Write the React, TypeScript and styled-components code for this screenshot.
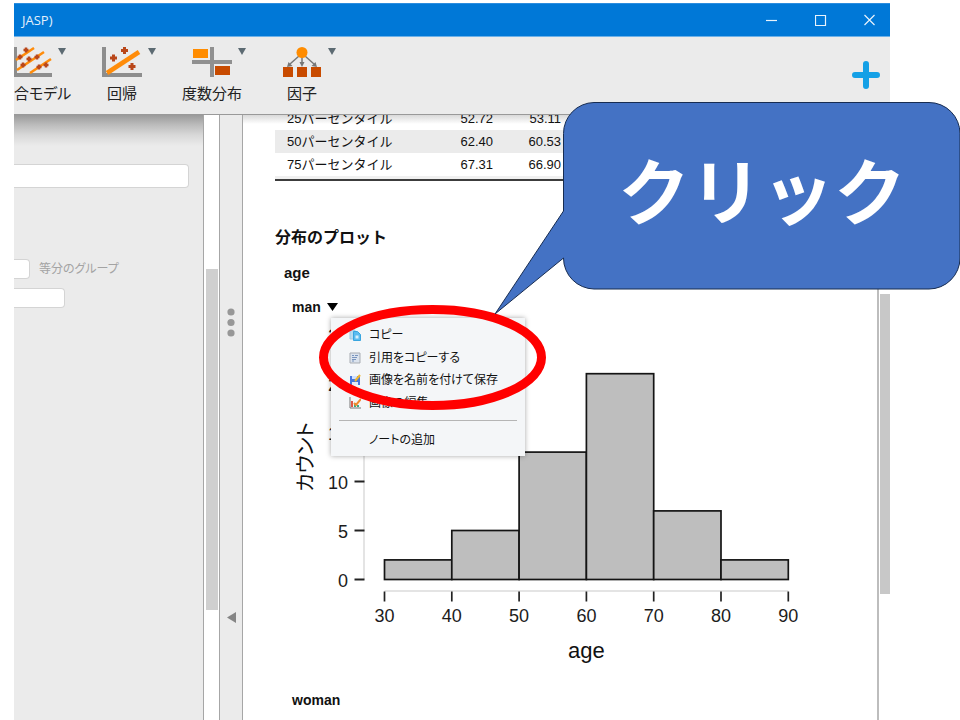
import React from "react";
import styled, { createGlobalStyle } from "styled-components";

const GlobalStyle = createGlobalStyle`
  * { box-sizing: border-box; }
  body { margin: 0; background: #fff; }
  button { border: 0; padding: 0; background: none; color: inherit; font: inherit; cursor: pointer; }
`;

const uiFont = `"Open Sans", "Noto Sans CJK JP", sans-serif`;
const reportFont = `"Liberation Sans", "Noto Sans CJK JP", sans-serif`;

const Slide = styled.main`
  position: relative;
  height: 100vh;
  min-height: 720px;
  padding: 3px 70px 0 14px;
  overflow: hidden;
  font-family: ${uiFont};
`;

const Window = styled.div`
  display: flex;
  flex-direction: column;
  height: 100%;
  overflow: hidden;
`;

const TitleBar = styled.header`
  display: flex;
  flex: none;
  align-items: center;
  justify-content: space-between;
  height: 34px;
  padding: 0 14px 0 8px;
  border-top: 1px solid #2b8ddf;
  border-bottom: 1px solid #6db1e8;
  background: #0078d7;
  color: #e4f0fb;
  font-size: 13px;
`;

const WindowControls = styled.div`
  display: flex;
  gap: 37px;
  button { display: flex; }
`;

const Ribbon = styled.nav`
  position: relative;
  z-index: 1;
  display: flex;
  flex: none;
  height: 78px;
  padding-top: 10px;
  border-bottom: 1px solid #999;
  background: #ebebeb;
`;

const RibbonButton = styled.button<{ $clipped?: boolean }>`
  display: flex;
  flex-direction: column;
  align-items: ${(p) => (p.$clipped ? "flex-start" : "stretch")};
  width: ${(p) => (p.$clipped ? 63 : 90)}px;
  height: 60px;
  gap: 3px;
  color: #222;
  font-size: 15px;
  line-height: 24px;
  white-space: nowrap;
  font-feature-settings: "palt";
`;

const IconRow = styled.span<{ $clipped?: boolean }>`
  display: grid;
  grid-template-columns: ${(p) => (p.$clipped ? "auto auto" : "1fr auto 1fr")};
  column-gap: 6px;
  height: 31px;
  > :nth-last-child(2) { ${(p) => (p.$clipped ? "" : "grid-column: 2;")} }
`;

const AddButton = styled.button`
  align-self: flex-start;
  display: flex;
  margin: 13px 10px 0 auto;
`;

const Workspace = styled.div`
  display: flex;
  flex: 1;
  min-height: 0;
`;

const OptionsPanel = styled.form`
  display: flex;
  flex: none;
  flex-direction: column;
  align-items: flex-start;
  width: 190px;
  padding-top: 49px;
  border-right: 1px solid #a6a6a6;
  background: linear-gradient(#999, #bcbcbc 10px, #d8d8d8 20px, #ebebeb 31px);
`;

const TextField = styled.input<{ $width: number; $tall?: boolean }>`
  width: ${(p) => p.$width}px;
  height: ${(p) => (p.$tall ? 24 : 20)}px;
  border: 1px solid #d4d4d4;
  border-left: 0;
  border-radius: 0 4px 4px 0;
  background: #fff;
  outline: none;
`;

const FieldRow = styled.label`
  display: flex;
  align-items: center;
  gap: 9px;
  height: 20px;
  margin: 71px 0 9px;
  color: #a3a3a3;
  font-size: 12px;
  line-height: 18px;
  font-feature-settings: "palt";
`;

const OptionsScroll = styled.div`
  flex: none;
  width: 16px;
  padding: 154px 1px 0 2px;
  border-right: 1px solid #a6a6a6;
  background: #fff;
`;

const Thumb = styled.div<{ $size: number; $color: string }>`
  height: ${(p) => p.$size}px;
  background: ${(p) => p.$color};
`;

const Splitter = styled.div`
  display: flex;
  flex: none;
  flex-direction: column;
  align-items: center;
  width: 23px;
  padding-top: 193px;
  border-right: 1px solid #a6a6a6;
  background: #ebebeb;
`;

const Collapse = styled.button`
  display: flex;
  margin-top: 274px;
`;

const Report = styled.article`
  flex: 1;
  min-width: 0;
  padding-left: 32px;
  background: linear-gradient(#d9d9d9, #fff 9px);
  border-right: 2px solid #bdbdbd;
  overflow: hidden;
  color: #111;
  font-family: ${reportFont};
`;

const ReportScroll = styled.div`
  flex: none;
  width: 11px;
  padding: 179px 0 0 1px;
  background: #fff;
`;

const StatsTable = styled.table`
  width: 295px;
  margin-top: -7px;
  border-collapse: collapse;
  table-layout: fixed;
  border-bottom: 2px solid #3c3c3c;
  font-size: 13px;
  line-height: 23px;
  th { width: 159px; padding: 0 0 0 12px; text-align: left; font-weight: 400; }
  td { padding: 0 9px; text-align: right; }
  tbody tr:first-child { line-height: 22px; }
  tbody tr:nth-child(even) { background: #ebebeb; }
  tfoot td { height: 4px; padding: 0; background: #f0f0f0; }
`;

const SectionTitle = styled.h2`
  margin: 45px 0 0;
  font-size: 16px;
  line-height: 24px;
`;

const VariableTitle = styled.h3`
  margin: 13px 0 0 9px;
  font-size: 15px;
  line-height: 20px;
`;

const GroupTitle = styled.h4<{ $gap: number }>`
  position: relative;
  z-index: 1;
  display: flex;
  align-items: center;
  gap: 6px;
  margin: ${(p) => p.$gap}px 0 0 17px;
  font-size: 14px;
  line-height: 20px;
  button { display: flex; }
`;

const Chart = styled.svg`
  display: block;
  margin-left: 18px;
  font-family: ${reportFont};
`;

const Menu = styled.ul`
  position: absolute;
  top: 21px;
  left: 39px;
  width: 194px;
  margin: 0;
  padding: 6px 8px 5px;
  list-style: none;
  background: #f4f6f8;
  box-shadow: 0 0 5px rgba(0, 0, 0, 0.35);
  color: #111;
  font-family: ${uiFont};
  font-size: 12px;
  line-height: 18px;
  font-weight: 400;
  font-feature-settings: "palt";
`;

const MenuGroup = styled.li<{ $height: number }>`
  display: grid;
  grid-auto-rows: 1fr;
  height: ${(p) => p.$height}px;
  & + & { margin-top: 6px; padding-top: 7px; border-top: 1px solid #b5b5b5; }
`;

const MenuItem = styled.button`
  && { display: grid; }
  grid-template-columns: 12px 1fr;
  align-items: center;
  gap: 8px;
  width: 100%;
  padding-left: 10px;
  text-align: left;
  white-space: nowrap;
  span { grid-column: 2; }
`;

const Highlight = styled.svg`
  position: absolute;
  z-index: 2;
  top: 305px;
  left: 319px;
  pointer-events: none;
`;

const Callout = styled.aside`
  position: absolute;
  z-index: 3;
  top: 101px;
  left: 494px;
  width: 467px;
  height: 215px;
  pointer-events: none;
  > svg { position: absolute; inset: 0; }
`;

const CalloutText = styled.p`
  position: relative;
  margin: 0 0 0 69px;
  color: #fff;
  font-family: "Noto Sans CJK JP", sans-serif;
  font-size: 72px;
  font-weight: 700;
  line-height: 174px;
  text-align: center;
`;

const plus = (x: number, y: number, s = 3) => `M${x - s} ${y}h${2 * s}M${x} ${y - s}v${2 * s}`;

const MixedIcon = () => (
  <svg width="38" height="31" viewBox="0 0 38 31" fill="none">
    <path d="M1 0v29M0 28h38" stroke="#8d8d8d" strokeWidth="4" />
    <path d="M2 13 20 1M3 23 30 5M16 26 37 12" stroke="#ff8c0a" strokeWidth="2.500" />
    <path
      d={[[6, 10], [12, 3], [9, 18], [15, 12], [23, 10], [25, 20], [32, 18]].map(([x, y]) => plus(x, y, 2.5)).join("")}
      stroke="#b9471a"
      strokeWidth="2.500"
    />
  </svg>
);

const RegressionIcon = () => (
  <svg width="40" height="31" viewBox="0 0 40 31" fill="none">
    <path d="M2 0v30M0 28h40" stroke="#8d8d8d" strokeWidth="4" />
    <path d="M5 26 37 5" stroke="#ff8c0a" strokeWidth="4.500" />
    <path d={plus(11.5, 11, 3.5) + plus(22.5, 3.5, 3.5) + plus(30, 19.5, 3.5)} stroke="#b9471a" strokeWidth="3" />
  </svg>
);

const FrequencyIcon = () => (
  <svg width="40" height="31" viewBox="0 0 40 31">
    <path d="M18 0h4v30h-4zM0 13h40v4H0z" fill="#909090" />
    <path d="M1 2h15v9H1z" fill="#ff8c00" />
    <path d="M23 19h15v9H23z" fill="#c84b00" />
  </svg>
);

const FactorIcon = () => (
  <svg width="40" height="31" viewBox="0 0 40 31">
    <path d="M17 9 8 17M20 9v8M23 9l9 8" stroke="#777" strokeWidth="1.500" fill="none" />
    <path d="m5 20 1.500-5 4 4zM17.500 15h5L20 20zM35 20l-1.500-5-4 4z" fill="#777" />
    <circle cx="20" cy="5.500" r="5.500" fill="#ff8c00" />
    <path d="M1 20h10v10H1zM15 20h10v10H15zM29 20h10v10H29z" fill="#c84b00" />
  </svg>
);

const DropArrow = () => (
  <svg width="8" height="8" viewBox="0 0 8 8">
    <path d="M0 1h8L4 8z" fill="#5c6a72" />
  </svg>
);

const CopyIcon = () => (
  <svg width="12" height="12" viewBox="0 0 12 12">
    <path d="M1 1h5v9H1z" fill="#b9dcf1" stroke="#9ecbe6" />
    <path d="M4.500 2.500h4l3 3v6h-7z" fill="#5bbcf0" stroke="#38a5df" />
    <path d="M6.500 6.500h3v3h-3z" fill="#d8f0fc" />
  </svg>
);

const CiteIcon = () => (
  <svg width="12" height="12" viewBox="0 0 12 12" fill="none">
    <path d="M1 1h10v10H1z" fill="#dbe3ee" stroke="#a9adb3" />
    <path d="M3 3.500h2m1 0h3M3 5.500h5M3 7.500h4M3 9h2" stroke="#7994bd" />
  </svg>
);

const SaveIcon = () => (
  <svg width="12" height="12" viewBox="0 0 12 12">
    <path d="M1 2h10v9H1z" fill="#4777dc" />
    <path d="M3 2h5v3H3z" fill="#cfe0ff" />
    <path d="M3 8h6v3H3z" fill="#e4ebf8" />
    <path d="m6 7 5-6" stroke="#efb52c" strokeWidth="2" />
  </svg>
);

const EditIcon = () => (
  <svg width="12" height="12" viewBox="0 0 12 12" fill="none">
    <path d="M1 0v11h11" stroke="#777" />
    <path d="M3 4v6" stroke="#e05745" strokeWidth="2" />
    <path d="M6 6v4M9 8v2" stroke="#3aa882" strokeWidth="2" />
    <path d="m5 6 2 2 5-6" stroke="#f28a2b" strokeWidth="2" />
  </svg>
);

const ribbonItems = [
  { label: "合モデル", Icon: MixedIcon, clipped: true },
  { label: "回帰", Icon: RegressionIcon },
  { label: "度数分布", Icon: FrequencyIcon },
  { label: "因子", Icon: FactorIcon },
];

const percentiles = [
  ["25パーセンタイル", "52.72", "53.11"],
  ["50パーセンタイル", "62.40", "60.53"],
  ["75パーセンタイル", "67.31", "66.90"],
];

const menuItems = [
  { label: "コピー", Icon: CopyIcon },
  { label: "引用をコピーする", Icon: CiteIcon },
  { label: "画像を名前を付けて保存", Icon: SaveIcon },
  { label: "画像の編集", Icon: EditIcon },
];

const counts = [2, 5, 13, 21, 7, 2];
const chartX = (age: number) => 91.5 + (age - 30) * 6.73;
const chartY = (count: number) => 262.5 - count * 9.8;

const Histogram = () => (
  <Chart width="510" height="370" viewBox="0 0 510 370" role="img" aria-label="age">
    <path d={`M71 ${chartY(25)}V${chartY(0)}M${chartX(30)} 274H${chartX(90)}`} stroke="#dcdcdc" strokeWidth="1.500" />
    {counts.map((count, i) => (
      <rect
        key={i}
        x={chartX(30 + i * 10)}
        y={chartY(count)}
        width={67.3}
        height={chartY(0) - chartY(count)}
        fill="#bebebe"
        stroke="#141414"
        strokeWidth="1.700"
      />
    ))}
    <g fill="#1c1c1c" fontSize="18">
      {[0, 5, 10, 15, 20, 25].map((n) => (
        <g key={n}>
          <path d={`M61.500 ${chartY(n)}h10`} stroke="#222" strokeWidth="2" />
          <text x="55" y={chartY(n) + 7} textAnchor="end">{n}</text>
        </g>
      ))}
      {[30, 40, 50, 60, 70, 80, 90].map((n) => (
        <g key={n}>
          <path d={`M${chartX(n)} 274.500v10`} stroke="#222" strokeWidth="1.700" />
          <text x={chartX(n)} y="305" textAnchor="middle">{n}</text>
        </g>
      ))}
    </g>
    <g fill="#111" fontSize="22" textAnchor="middle">
      <text x={chartX(60)} y="341">age</text>
      <text transform="translate(20 140) rotate(-90)" fontSize="20" style={{ fontFeatureSettings: '"palt"' }}>カウント</text>
    </g>
  </Chart>
);

export default function App() {
  return (
    <Slide>
      <GlobalStyle />
      <Window>
        <TitleBar>
          <span>JASP)</span>
          <WindowControls>
            {[
              ["最小化", "M0 6.500h11"],
              ["最大化", "M.5 1.500h10v10H.5z"],
              ["閉じる", "m.5 1 10 10m0-10-10 10"],
            ].map(([label, d]) => (
              <button key={label} type="button" aria-label={label}>
                <svg width="12" height="12" viewBox="0 0 12 12" fill="none" stroke="#e8f3fc" strokeWidth="1.200">
                  <path d={d} />
                </svg>
              </button>
            ))}
          </WindowControls>
        </TitleBar>

        <Ribbon>
          {ribbonItems.map(({ label, Icon, clipped }) => (
            <RibbonButton key={label} type="button" $clipped={clipped}>
              <IconRow $clipped={clipped}>
                <Icon />
                <DropArrow />
              </IconRow>
              <span>{label}</span>
            </RibbonButton>
          ))}
          <AddButton type="button" aria-label="追加">
            <svg width="28" height="30" viewBox="0 0 28 30">
              <path d="M14 4v22M3 15h22" stroke="#14a0e6" strokeWidth="6" strokeLinecap="round" />
            </svg>
          </AddButton>
        </Ribbon>

        <Workspace>
          <OptionsPanel>
            <TextField $width={175} $tall aria-label="値" />
            <FieldRow>
              <TextField $width={16} />
              等分のグループ
            </FieldRow>
            <TextField $width={51} aria-label="パーセンタイル" />
          </OptionsPanel>
          <OptionsScroll>
            <Thumb $size={341} $color="#cfcfcf" />
          </OptionsScroll>
          <Splitter>
            <svg width="8" height="30" viewBox="0 0 8 30" fill="#979797">
              <circle cx="4" cy="4" r="3.600" />
              <circle cx="4" cy="14.500" r="3.600" />
              <circle cx="4" cy="25" r="3.600" />
            </svg>
            <Collapse type="button" aria-label="パネルを閉じる">
              <svg width="9" height="11" viewBox="0 0 9 11">
                <path d="M9 0v11L0 5.500z" fill="#858585" />
              </svg>
            </Collapse>
          </Splitter>

          <Report>
            <StatsTable>
              <tbody>
                {percentiles.map(([label, ...values]) => (
                  <tr key={label}>
                    <th scope="row">{label}</th>
                    {values.map((v) => (
                      <td key={v}>{v}</td>
                    ))}
                  </tr>
                ))}
              </tbody>
              <tfoot>
                <tr>
                  <td colSpan={3} />
                </tr>
              </tfoot>
            </StatsTable>
            <SectionTitle>分布のプロット</SectionTitle>
            <VariableTitle>age</VariableTitle>
            <GroupTitle $gap={14}>
              man
              <button type="button" aria-label="メニュー">
                <svg width="11" height="9" viewBox="0 0 11 9">
                  <path d="M0 0h11L5.500 8z" fill="#000" />
                </svg>
              </button>
              <Menu role="menu">
                <MenuGroup role="none" $height={90}>
                  {menuItems.map(({ label, Icon }) => (
                    <MenuItem key={label} type="button" role="menuitem">
                      <Icon />
                      <span>{label}</span>
                    </MenuItem>
                  ))}
                </MenuGroup>
                <MenuGroup role="none" $height={31}>
                  <MenuItem type="button" role="menuitem">
                    <span>ノートの追加</span>
                  </MenuItem>
                </MenuGroup>
              </Menu>
            </GroupTitle>
            <Histogram />
            <GroupTitle $gap={3}>woman</GroupTitle>
          </Report>
          <ReportScroll>
            <Thumb $size={300} $color="#c8c8c8" />
          </ReportScroll>
        </Workspace>
      </Window>

      <Highlight width="228" height="106" viewBox="0 0 228 106">
        <ellipse cx="113.500" cy="52.500" rx="109" ry="48" fill="none" stroke="#f00" strokeWidth="9" />
      </Highlight>
      <Callout>
        <svg width="467" height="215" viewBox="0 0 467 215">
          <path
            d="M100 1.500H435A31 31 0 0 1 466 32.500V157A31 31 0 0 1 435 188H100A31 31 0 0 1 69.500 157L1 213 69.500 110V32.500A31 31 0 0 1 100 1.500Z"
            fill="#4472c4"
            stroke="#172c51"
          />
        </svg>
        <CalloutText>クリック</CalloutText>
      </Callout>
    </Slide>
  );
}
